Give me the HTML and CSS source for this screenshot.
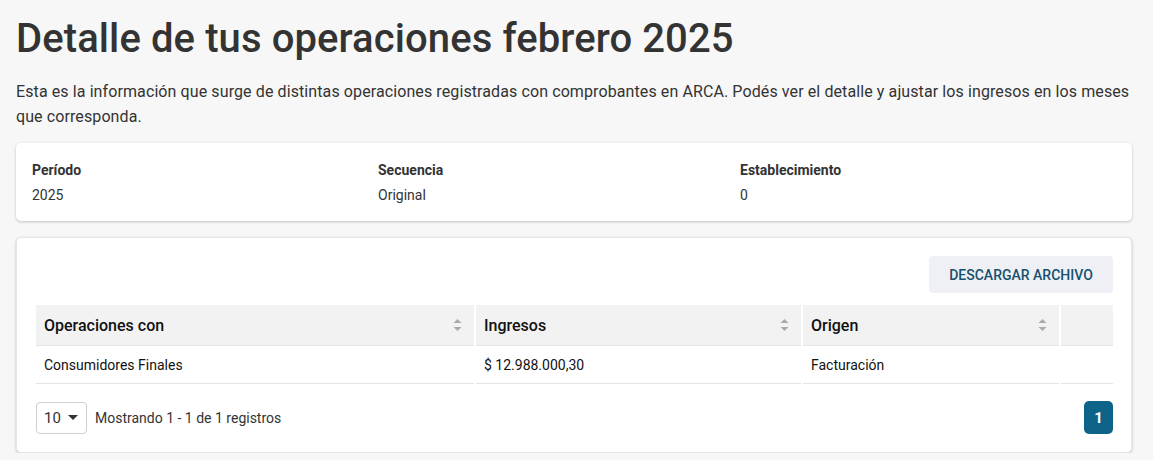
FILE: index.html
```html
<!DOCTYPE html>
<html lang="es">
<head>
<meta charset="utf-8">
<title>Detalle de tus operaciones</title>
<link rel="stylesheet" href="styles.css">
</head>
<body>
<main class="page">
  <h1 class="title">Detalle de tus operaciones febrero 2025</h1>
  <p class="intro">Esta es la información que surge de distintas operaciones registradas con comprobantes en ARCA. Podés ver el detalle y ajustar los ingresos en los meses que corresponda.</p>

  <section class="card summary">
    <div class="field">
      <div class="field-label">Período</div>
      <div class="field-value">2025</div>
    </div>
    <div class="field">
      <div class="field-label">Secuencia</div>
      <div class="field-value">Original</div>
    </div>
    <div class="field">
      <div class="field-label">Establecimiento</div>
      <div class="field-value">0</div>
    </div>
  </section>

  <section class="card table-card">
    <div class="actions">
      <button class="btn-download" type="button">DESCARGAR ARCHIVO</button>
    </div>
    <table class="ops">
      <colgroup>
        <col class="c1"><col class="c2"><col class="c3"><col class="c4">
      </colgroup>
      <thead>
        <tr>
          <th><div class="th-in"><span>Operaciones con</span><svg class="sort" width="9" height="14" viewBox="0 0 9 14"><path d="M4.5 1 L8.5 5 L0.5 5 Z M4.5 13 L8.5 9 L0.5 9 Z" fill="#aaaaaa"/></svg></div></th>
          <th><div class="th-in"><span>Ingresos</span><svg class="sort" width="9" height="14" viewBox="0 0 9 14"><path d="M4.5 1 L8.5 5 L0.5 5 Z M4.5 13 L8.5 9 L0.5 9 Z" fill="#aaaaaa"/></svg></div></th>
          <th><div class="th-in"><span>Origen</span><svg class="sort" width="9" height="14" viewBox="0 0 9 14"><path d="M4.5 1 L8.5 5 L0.5 5 Z M4.5 13 L8.5 9 L0.5 9 Z" fill="#aaaaaa"/></svg></div></th>
          <th></th>
        </tr>
      </thead>
      <tbody>
        <tr>
          <td>Consumidores Finales</td>
          <td>$ 12.988.000,30</td>
          <td>Facturación</td>
          <td></td>
        </tr>
      </tbody>
    </table>
    <div class="table-footer">
      <div class="footer-left">
        <div class="page-size"><span>10</span><svg width="10" height="5" viewBox="0 0 10 5"><path d="M0 0 L10 0 L5 5 Z" fill="#333"/></svg></div>
        <span class="showing">Mostrando 1 - 1 de 1 registros</span>
      </div>
      <button class="page-btn" type="button">1</button>
    </div>
  </section>
</main>
</body>
</html>
```

FILE: styles.css
```css
html, body {
  margin: 0;
  padding: 0;
  background: #f7f7f7;
}
body {
  font-family: Roboto, "Liberation Sans", Arial, sans-serif;
  color: #333333;
}
.page {
  padding: 0 21px 0 16px;
}
.title {
  margin: 0;
  padding-top: 13px;
  font-size: 40px;
  line-height: 51px;
  font-weight: 500;
  color: #333333;
  letter-spacing: 0.1px;
}
.intro {
  margin: 15px 0 0;
  font-size: 16px;
  line-height: 25px;
  color: #333333;
  letter-spacing: 0.1px;
}
.card {
  background: #ffffff;
  border-radius: 5px;
  box-shadow: 0 1px 3px rgba(0, 0, 0, 0.22);
}
.summary {
  margin-top: 14px;
  display: grid;
  grid-template-columns: 346px 362px 1fr;
  padding: 19px 16px 17px;
}
.field-label {
  font-size: 14px;
  font-weight: 700;
  line-height: 17px;
  color: #333333;
}
.field-value {
  margin-top: 8px;
  font-size: 14px;
  line-height: 17px;
  color: #333333;
}
.table-card {
  margin-top: 16px;
  padding: 18px 18px 18px 19px;
  border: 1px solid #e6e6e6;
}
.actions {
  display: flex;
  justify-content: flex-end;
}
.btn-download {
  height: 37px;
  padding: 0;
  border: none;
  border-radius: 4px;
  background: #eef0f5;
  color: #17506e;
  font-family: Roboto, "Liberation Sans", Arial, sans-serif;
  font-size: 14px;
  font-weight: 500;
  width: 184px;
}
.ops {
  margin-top: 12px;
  width: 100%;
  border-collapse: collapse;
  table-layout: fixed;
}
.c1 { width: 439px; }
.c2 { width: 327px; }
.c3 { width: 258px; }
.ops th {
  background: #f2f2f2;
  height: 40px;
  padding: 0 12px 0 8px;
  text-align: left;
  font-size: 16px;
  font-weight: 500;
  color: #111111;
  border-left: 2px solid #ffffff;
  border-bottom: 1px solid #e4e4e4;
}
.ops th:first-child { border-left: none; }
.th-in {
  display: flex;
  align-items: center;
  justify-content: space-between;
}
.ops td {
  height: 37px;
  padding: 0 8px;
  font-size: 14px;
  color: #111111;
  border-left: 2px solid #ffffff;
  border-bottom: 1px solid #e4e4e4;
}
.ops td:first-child { border-left: none; }
.table-footer {
  margin-top: 17px;
  display: flex;
  align-items: center;
  justify-content: space-between;
}
.footer-left {
  display: flex;
  align-items: center;
  gap: 8px;
}
.page-size {
  box-sizing: border-box;
  width: 51px;
  height: 32px;
  border: 1px solid #cfcfcf;
  border-radius: 4px;
  display: flex;
  align-items: center;
  justify-content: space-between;
  padding: 0 8px 0 7px;
  font-size: 15px;
  color: #333;
}
.showing {
  font-size: 14px;
  color: #333333;
}
.page-btn {
  width: 29px;
  height: 33px;
  border: none;
  border-radius: 5px;
  background: #0e6488;
  color: #ffffff;
  font-family: Roboto, "Liberation Sans", Arial, sans-serif;
  font-size: 15px;
  font-weight: 700;
  padding: 0;
}
```
